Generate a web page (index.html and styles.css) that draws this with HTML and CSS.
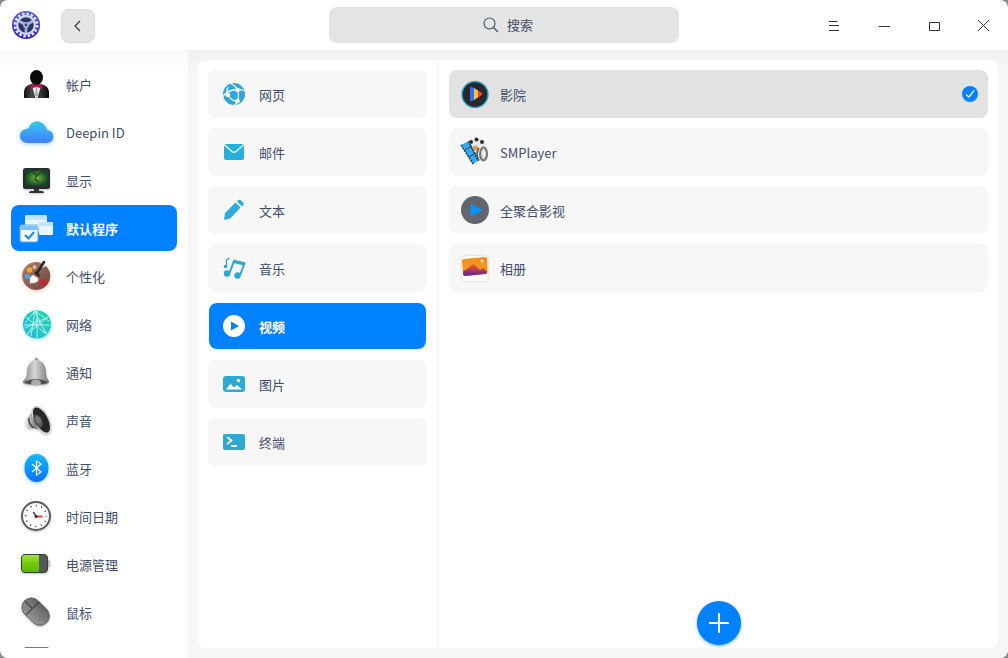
FILE: index.html
```html
<!DOCTYPE html>
<html lang="zh-CN">
<head>
    <meta charset="utf-8">
    <meta name="viewport" content="width=device-width,initial-scale=1.0">
    <title>控制中心</title>
    <link rel="stylesheet" href="styles.css">
</head>
<body>
<div class="window">
    <header class="titlebar">
        <div class="title-left">
            <svg class="logo" viewBox="0 0 30 30">
                <defs><linearGradient id="gear" x1="0" y1="0" x2="0" y2="1"><stop offset="0" stop-color="#5560d6"/><stop offset="1" stop-color="#2a12d8"/></linearGradient></defs>
                <circle cx="15" cy="15" r="14" fill="url(#gear)"/>
                <circle cx="15" cy="15" r="11" fill="none" stroke="#dfe4fa" stroke-width="3" stroke-dasharray="2.6 1.72"/>
                <circle cx="15" cy="15" r="8.8" fill="#2c3560" stroke="#d3d9f4" stroke-width="2.2"/>
                <path d="M15 15L8 11M15 15L22 11M15 15V23" stroke="#a9b4e2" stroke-width="2.600"/>
                <circle cx="15" cy="15" r="3" fill="#a9b4e2"/><circle cx="15" cy="15" r="1.400" fill="#3444a8"/>
            </svg>
            <button class="back" type="button" aria-label="返回"><svg width="16" height="16" viewBox="0 0 16 16"><path d="M10 3L5 8l5 5" fill="none" stroke="#303540" stroke-width="1.2"/></svg></button>
        </div>
        <label class="search">
            <svg width="16" height="16" viewBox="0 0 16 16"><circle cx="6.5" cy="6.5" r="5.5" fill="none" stroke="#414d68" stroke-width="1.1"/><path d="M10.500 10.500L15 15" stroke="#414d68" stroke-width="1.2"/></svg>
            <input type="text" placeholder="搜索" aria-label="搜索">
        </label>
        <div class="controls">
            <button type="button" aria-label="菜单"><svg width="14" height="14" viewBox="-1 -1 14 14"><path d="M2 2.5h8M2 6.5h10M2 11.5h10"/></svg></button>
            <button type="button" aria-label="最小化"><svg width="14" height="14" viewBox="-1 -1 14 14"><path d="M2 7.5h11"/></svg></button>
            <button type="button" aria-label="最大化"><svg width="14" height="14" viewBox="-1 -1 14 14"><path d="M2.500 3.500h10v8h-10z"/></svg></button>
            <button type="button" aria-label="关闭"><svg width="14" height="14" viewBox="-1 -1 14 14"><path d="M1 1l11 11M12 1l-11 11"/></svg></button>
        </div>
    </header>
    <div class="main">
        <nav class="sidebar">
            <a href="#">
                <svg viewBox="0 0 36 36">
                    <defs><linearGradient id="suit"><stop offset="0" stop-color="#111"/><stop offset=".3" stop-color="#484848"/><stop offset=".7" stop-color="#333"/><stop offset="1" stop-color="#080808"/></linearGradient></defs>
                    <path d="M6 32v-6q0-6 7-8l5-2 5 2q8 2 8 8v6z" fill="url(#suit)"/>
                    <path d="M14 20h9l-3.500 12h-2z" fill="#eee"/><path d="M18 22h1l1 7-1.500 2-1.500-2z" fill="#aaa"/>
                    <ellipse cx="18.500" cy="11.500" rx="6.500" ry="7.500" fill="#090909"/>
                    <path d="M13 18l5.500 1 5.500-1v4.500l-5.500-1.500-5.500 1.500z" fill="#c80b5a"/>
                </svg>
                <span>帐户</span>
            </a>
            <a href="#">
                <svg class="shadow-blue" viewBox="0 0 36 36">
                    <defs><linearGradient id="cloud" x1="0" y1="0" x2="0" y2="1"><stop offset="0" stop-color="#35c8ef"/><stop offset="1" stop-color="#4080fa"/></linearGradient></defs>
                    <path d="M10 29C5 29 2 26 2 22s3-7 7-7q1-1 2-1c2-9 15-9 18 2 9 1 8 13 0 13z" fill="url(#cloud)"/>
                </svg>
                <span>Deepin ID</span>
            </a>
            <a href="#">
                <svg class="shadow" viewBox="0 0 36 36">
                    <defs><radialGradient id="screen"><stop offset="0" stop-color="#8db62b"/><stop offset=".5" stop-color="#3f7f2c"/><stop offset="1" stop-color="#17432c"/></radialGradient></defs>
                    <rect x="5" y="6" width="27" height="21" rx="2.500" fill="#292c2c"/>
                    <rect x="7" y="8" width="23" height="16" fill="url(#screen)"/>
                    <path d="M15 10l4 4 3-3M19 13l-2 4 4 3" fill="none" stroke="#174321" stroke-width="1.200"/>
                    <path d="M16 27h5v2h3q2 0 2 2H11q0-2 2-2h3z" fill="#303030"/>
                </svg>
                <span>显示</span>
            </a>
            <a href="#" class="active" aria-current="page">
                <svg viewBox="0 0 36 36">
                    <rect x="7" y="5" width="22" height="17" rx="2" fill="#e9f5ff"/><path d="M7 10V7q0-2 2-2h18q2 0 2 2v3z" fill="#c4e2ff"/>
                    <rect x="21" y="12" width="14" height="13" rx="1" fill="#e9f5ff"/><path d="M21 16v-3q0-1 1-1h12q1 0 1 1v3z" fill="#c4e2ff"/>
                    <rect x="2" y="15" width="18" height="17" rx="2" fill="#eef7ff" stroke="#55aaff"/><path d="M3 20v-3q0-1 1-1h14q1 0 1 1v3z" fill="#83c0ff"/>
                    <path d="M7 25l3.500 3.500 5.500-6.500" fill="none" stroke="#2387d8" stroke-width="2"/>
                </svg>
                <span>默认程序</span>
            </a>
            <a href="#">
                <svg class="shadow-brown" viewBox="0 0 36 36">
                    <defs><linearGradient id="wood" x1="0" y1="0" x2="1" y2="1"><stop offset="0" stop-color="#a9806c"/><stop offset="1" stop-color="#684439"/></linearGradient></defs>
                    <path d="M18 4a14 14 0 0 1 5 1L24 10l4-2A14 14 0 1 1 18 4z" fill="url(#wood)"/>
                    <circle cx="11.500" cy="12" r="2.800" fill="#f2a534"/><circle cx="16.500" cy="9" r="2" fill="#d8b9a0"/><circle cx="9.500" cy="18.500" r="2.800" fill="#579bec"/><circle cx="25" cy="24.500" r="3.300" fill="#cb2038"/>
                    <path d="M15 17l5 3c2 3-3 6-6 5q-2 0-2 1c0-4-1-7 3-9z" fill="#fff7ee"/><path d="M16 15l5 4 1-2-4-4z" fill="#262626"/><path d="M19 15L26 4" stroke="#262626" stroke-width="2.500" stroke-linecap="round"/>
                </svg>
                <span>个性化</span>
            </a>
            <a href="#">
                <svg class="shadow-cyan" viewBox="0 0 36 36">
                    <defs><linearGradient id="net" x1="1" y1="0" x2="0" y2="1"><stop offset="0" stop-color="#21d6a4"/><stop offset="1" stop-color="#20bce5"/></linearGradient></defs>
                    <circle cx="19" cy="18.500" r="14" fill="url(#net)"/>
                    <g fill="none" stroke="#d2fff6" stroke-width=".8"><path d="M6 19h26M17 5l-4 25M8 11l20 17M30 11L9 28M17 5l11 23M17 5L7 17M17 5l14 10M19 5v27M7 22l23-11M10 28l9-15 10 15"/></g>
                </svg>
                <span>网络</span>
            </a>
            <a href="#">
                <svg class="shadow" viewBox="0 0 36 36">
                    <defs><linearGradient id="bell"><stop offset="0" stop-color="#858585"/><stop offset=".45" stop-color="#d6d6d6"/><stop offset="1" stop-color="#777"/></linearGradient></defs>
                    <circle cx="18.500" cy="6" r="2" fill="#999"/>
                    <path d="M5 27q4-3 4-9c0-7 4-12 9.500-12S28 11 28 18q0 6 3 9c1 3-4 4-13 4S4 30 5 27z" fill="url(#bell)"/>
                    <path d="M6 28q6-3 12-3t12 3q-2 2.500-12 2.500T6 28z" fill="#4d4d4d"/><ellipse cx="18" cy="28.500" rx="5" ry="3" fill="#aaa"/>
                </svg>
                <span>通知</span>
            </a>
            <a href="#">
                <svg class="shadow" viewBox="0 0 36 36">
                    <defs><linearGradient id="cone"><stop offset="0" stop-color="#eee"/><stop offset=".5" stop-color="#777"/><stop offset="1" stop-color="#ddd"/></linearGradient></defs>
                    <path d="M9 16l8-9 12 23-14-4q-5 2-7-2-2-4 1-8z" fill="url(#cone)"/><path d="M11 16q-1 6 5 10" fill="none" stroke="#444" stroke-width="1.500"/>
                    <ellipse cx="23.500" cy="18" rx="7" ry="14.500" transform="rotate(-28 23.500 18)" fill="#262626" stroke="#d0d0d0" stroke-width="1.400"/>
                    <ellipse cx="20" cy="19" rx="4" ry="7" transform="rotate(-28 20 19)" fill="#555"/><ellipse cx="20" cy="18" rx="2.500" ry="4" transform="rotate(-28 20 18)" fill="#777"/>
                </svg>
                <span>声音</span>
            </a>
            <a href="#">
                <svg class="shadow-blue" viewBox="0 0 36 36">
                    <defs><linearGradient id="bt" x1="0" y1="0" x2="0" y2="1"><stop offset="0" stop-color="#14bbf8"/><stop offset="1" stop-color="#0873fa"/></linearGradient></defs>
                    <ellipse cx="18.500" cy="18" rx="12" ry="14" fill="url(#bt)"/>
                    <path d="M14 14l9 8-4.500 3V11l4.500 3-9 8" fill="none" stroke="#fff" stroke-width="1.200"/>
                </svg>
                <span>蓝牙</span>
            </a>
            <a href="#">
                <svg class="shadow" viewBox="0 0 36 36">
                    <circle cx="18" cy="18" r="14" fill="#fdfdfd" stroke="#5d5d5d" stroke-width="2"/>
                    <circle cx="18" cy="18" r="10.500" fill="none" stroke="#333" stroke-width="1.600" stroke-dasharray="1 4.498" stroke-dashoffset=".5"/>
                    <path d="M18 18.500h6.500" stroke="#ed3d4d" stroke-width="2"/><path d="M15.500 14l2.500 4.500" stroke="#333" stroke-width="1.500"/><circle cx="18" cy="18.500" r="1.500" fill="#333"/>
                </svg>
                <span>时间日期</span>
            </a>
            <a href="#">
                <svg class="shadow" viewBox="0 0 36 36">
                    <defs><linearGradient id="power" x1="0" y1="0" x2="0" y2="1"><stop offset="0" stop-color="#a2e33b"/><stop offset=".5" stop-color="#70cb0c"/><stop offset="1" stop-color="#5fb600"/></linearGradient></defs>
                    <rect x="29" y="14" width="3" height="7" rx="1" fill="#bbb"/>
                    <rect x="3.500" y="8.500" width="26" height="18" rx="3.500" fill="#55575a" stroke="#34422a"/>
                    <path d="M21 9v17H7q-3 0-3-3V12q0-3 3-3z" fill="url(#power)"/>
                </svg>
                <span>电源管理</span>
            </a>
            <a href="#">
                <svg class="shadow" viewBox="0 0 36 36">
                    <defs><linearGradient id="mouse"><stop offset="0" stop-color="#969696"/><stop offset="1" stop-color="#626262"/></linearGradient></defs>
                    <g transform="rotate(-45 18 18)"><rect x="8.500" y="2" width="19" height="31" rx="9.500" fill="url(#mouse)" stroke="#555" stroke-width=".8"/><path d="M8.500 13h19M18 2v11" fill="none" stroke="#444" stroke-width="1.200"/></g>
                </svg>
                <span>鼠标</span>
            </a>
            <a href="#" aria-label="键盘">
                <svg viewBox="0 0 36 36"><rect x="6" y="5" width="25" height="24" rx="2" fill="#777"/></svg>
            </a>
        </nav>
        <div class="content">
            <div class="panel">
                <div class="types">
                    <button type="button">
                        <svg viewBox="0 0 24 24"><circle cx="12" cy="12" r="11" fill="#2ca7d8"/><g fill="none" stroke="#f8f8f8" stroke-width="1.300"><path d="M8 1q5 2 7.500 6.500M1 14.500q5-7 14.500-7 4 0 7 1.500M6 13q3 6 9.500 6.500M15.500 7.500q2 6 0 12-1 2-3 3.500M6 13q-2-4 0-8"/></g><g fill="#f8f8f8"><circle cx="15.500" cy="8" r="2.300"/><circle cx="6" cy="13" r="2.300"/><circle cx="15.500" cy="19" r="2.300"/></g></svg>
                        <span>网页</span>
                    </button>
                    <button type="button">
                        <svg viewBox="0 0 24 24"><rect x="2" y="4" width="20" height="16" rx="2" fill="#24b0dc"/><path d="M2 4.500l8 7q2 1.500 4 0l8-7" fill="none" stroke="#f8f8f8" stroke-width="1.400"/></svg>
                        <span>邮件</span>
                    </button>
                    <button type="button">
                        <svg viewBox="0 0 24 24"><path d="M2 22l1-7L13.500 4.500l5 5L8 20.500zM15 3.500L16.500 2q1-.5 2 0l3 3q.5 1 0 2L20 8.500z" fill="#29aedb"/></svg>
                        <span>文本</span>
                    </button>
                    <button type="button">
                        <svg viewBox="0 0 24 24"><path d="M7.500 17L12 5l10.500 2.500L18 19" fill="none" stroke="#2ba9cf" stroke-width="2"/><path d="M12 4l11 2.500-1 3L11 7z" fill="#2ba9cf"/><g fill="#2ba9cf"><circle cx="5" cy="17.500" r="3.200"/><circle cx="15.500" cy="19.500" r="3.200"/><circle cx="3.500" cy="10.500" r="1.800"/></g><path d="M4.500 10V4l3-2" fill="none" stroke="#2ba9cf" stroke-width="1.300"/></svg>
                        <span>音乐</span>
                    </button>
                    <button type="button" class="active" aria-pressed="true">
                        <svg viewBox="0 0 24 24"><circle cx="12" cy="12" r="11" fill="#fff"/><path d="M9 7.500v9l8-4.500z" fill="#0081ff"/></svg>
                        <span>视频</span>
                    </button>
                    <button type="button">
                        <svg viewBox="0 0 24 24"><rect x="1" y="4" width="22" height="16" rx="3" fill="#2caad2"/><path d="M4 17.500l4.500-6 3.500 4 3-2.500 5 4.500z" fill="#fff"/><circle cx="16.500" cy="8.500" r="1.700" fill="#fff"/></svg>
                        <span>图片</span>
                    </button>
                    <button type="button">
                        <svg viewBox="0 0 24 24"><rect x="1" y="4" width="22" height="16" rx="2" fill="#2caad2"/><path d="M5 7l4.500 3.500L5 14M9 16h6" fill="none" stroke="#fff" stroke-width="1.800"/></svg>
                        <span>终端</span>
                    </button>
                </div>
                <div class="apps">
                    <button type="button" class="checked" aria-pressed="true">
                        <svg viewBox="0 0 32 32"><circle cx="16" cy="16.500" r="13" fill="#25282d" stroke="#32a9c4" stroke-width="1.400"/><path d="M11 10q0-2 2-1l2 1v12l-2 1q-2 1-2-1z" fill="#316cf2"/><path d="M15 10l4 2.500v7L15 22z" fill="#fac529"/><path d="M19 12.500l4 2.500q1 1 0 2l-4 2.500z" fill="#f13c45"/></svg>
                        <span>影院</span>
                        <svg class="tick" viewBox="0 0 16 16"><circle cx="8" cy="8" r="8" fill="#0081ff"/><path d="M4 8.500l3 2.500 5-6.500" fill="none" stroke="#fff" stroke-width="1.300"/></svg>
                    </button>
                    <button type="button">
                        <svg viewBox="0 0 32 32">
                            <circle cx="18" cy="14" r="11" fill="#e9e9e9"/><g fill="#2f2f2f"><circle cx="12" cy="6" r="2"/><circle cx="17.500" cy="3.500" r="2"/><circle cx="23" cy="6" r="2"/></g><circle cx="16.500" cy="12" r="2.600" fill="#f0943e"/>
                            <path d="M2 9l8-4 10 19-6 4z" fill="#35a8ee"/><path d="M2 9l12 19M9.500 5.500L19.500 25" stroke="#20374a" stroke-width="1.500" stroke-dasharray="2 1"/><path d="M6 14l7-4M10 21l7-4" stroke="#174868"/>
                            <ellipse cx="24.500" cy="18" rx="3.500" ry="6.500" fill="#d8d8dc" stroke="#70747d" stroke-width="2"/><ellipse cx="25" cy="18" rx="1.200" ry="3" fill="#fff"/><path d="M20 12q-4 6 0 12" fill="none" stroke="#555" stroke-width="1.500"/>
                        </svg>
                        <span>SMPlayer</span>
                    </button>
                    <button type="button">
                        <svg viewBox="0 0 32 32"><circle cx="16" cy="16" r="14" fill="#63666d"/><path d="M11.500 9.500v13L24 16z" fill="#0c91f5"/></svg>
                        <span>全聚合影视</span>
                    </button>
                    <button type="button">
                        <svg class="shadow-light" viewBox="0 0 32 32">
                            <defs><linearGradient id="sunset" x1="0" y1="0" x2="0" y2="1"><stop offset="0" stop-color="#f58a1c"/><stop offset="1" stop-color="#f3a21d"/></linearGradient><linearGradient id="hill" x1="0" y1="0" x2="0" y2="1"><stop offset="0" stop-color="#ed5b26"/><stop offset="1" stop-color="#63209d"/></linearGradient></defs>
                            <rect x="3" y="4" width="26" height="25" rx="4" fill="#fffdfa"/>
                            <path d="M5 7l21-2q2 0 2 2l.5 13q0 2-2 2L6 24q-2 0-2-2L3 9q0-2 2-2z" fill="url(#sunset)"/>
                            <path d="M4 19l4-2 5-4q2-1 4 1l4 4 3-2 4 3v1q0 2-2 2L6 24q-2 0-2-2z" fill="url(#hill)"/><circle cx="23" cy="9" r="1.400" fill="#fff0bd"/>
                        </svg>
                        <span>相册</span>
                    </button>
                    <button type="button" class="add" aria-label="添加"><svg viewBox="0 0 20 20"><path d="M10 0v20M0 10h20" stroke="#fff" stroke-width="2"/></svg></button>
                </div>
            </div>
        </div>
    </div>
</div>
</body>
</html>
```

FILE: styles.css
```css
*{box-sizing: border-box;}
body{margin: 0;background: #8e8a8a;color: #414d68;font-family: "Noto Sans CJK SC", sans-serif;font-size: 13px;line-height: 20px;}
button,input{padding: 0;border: 0;background: none;color: inherit;font: inherit;}
a{color: inherit;text-decoration: none;}
svg{flex: none;display: block;}

.window{display: flex;flex-direction: column;height: 100vh;background: #fff;border-radius: 8px;overflow: hidden;}

/* title bar */
.titlebar{display: grid;grid-template-columns: 1fr 350px 1fr;align-items: center;height: 50px;flex: none;}
.title-left{display: flex;align-items: center;gap: 20px;padding-left: 11px;}
.logo{width: 30px;height: 30px;}
.back{display: flex;align-items: center;justify-content: center;width: 34px;height: 34px;margin-top: 2px;background: #e5e5e5;border: 1px solid #dadada;border-radius: 8px;}
.search{display: flex;align-items: center;justify-content: center;gap: 8px;height: 36px;padding-left: 8px;background: #e4e4e4;border-radius: 8px;}
.search input{field-sizing: content;outline: none;}
.search input::placeholder{color: #414d68;opacity: 1;}
.controls{display: flex;justify-content: flex-end;}
.controls button{display: flex;align-items: center;justify-content: center;width: 50px;height: 50px;}
.controls path{fill: none;stroke: #303540;}

.main{display: flex;flex: 1;min-height: 0;}

/* sidebar */
.sidebar{display: flex;flex-direction: column;gap: 2px;width: 188px;flex: none;margin-bottom: 10px;padding: 11px 11px 0;overflow: hidden;background: linear-gradient(#f7f7f7, #fff 20px);}
.sidebar a{display: flex;align-items: center;gap: 12px;height: 46px;flex: none;padding: 0 8px 0 7px;border-radius: 8px;}
.sidebar svg{width: 36px;height: 36px;}
.sidebar span,.types span,.apps span{padding-top: 1px;}
.active{background: #0081ff;color: #fff;font-weight: 700;}

.shadow{filter: drop-shadow(0 1px 1px rgba(0,0,0,.25));}
.shadow-light{filter: drop-shadow(0 0 1px rgba(0,0,0,.2));}
.shadow-blue{filter: drop-shadow(0 1px 2px rgba(0,129,255,.4));}
.shadow-cyan{filter: drop-shadow(0 1px 2px rgba(0,200,230,.35));}
.shadow-brown{filter: drop-shadow(0 1px 2px rgba(190,70,30,.35));}

/* content */
.content{display: flex;flex: 1;min-width: 0;padding: 10px;background: linear-gradient(#f0f0f0, #f7f7f7 20px);}
.panel{display: flex;flex: 1;min-width: 0;background: #fff;border-radius: 8px;}
.types{display: flex;flex-direction: column;gap: 10px;width: 241px;flex: none;padding: 10px;border-right: 2px solid #f8f8f8;}
.types button,.apps button{display: flex;align-items: center;height: 48px;background: #f7f7f7;border-radius: 8px;text-align: left;}
.types button{gap: 13px;padding: 0 14px;}
.types svg{width: 24px;height: 24px;}
.types .active{background: #0081ff;background-clip: padding-box;border: 1px solid transparent;padding: 0 13px;border-radius: 9px;}
.apps{display: flex;flex-direction: column;gap: 10px;flex: 1;min-width: 0;padding: 10px 10px 3px;}
.apps button{gap: 9px;padding: 0 10px;}
.apps svg{width: 32px;height: 32px;}
.apps .checked{background: #e2e2e2;}
.apps .tick{width: 16px;height: 16px;margin-left: auto;}
.apps .add{justify-content: center;align-self: center;width: 44px;height: 44px;margin-top: auto;padding: 0;background: #0081ff;border-radius: 50%;box-shadow: 0 1px 3px rgba(0,129,255,.6);}
.apps .add svg{width: 20px;height: 20px;}
```
